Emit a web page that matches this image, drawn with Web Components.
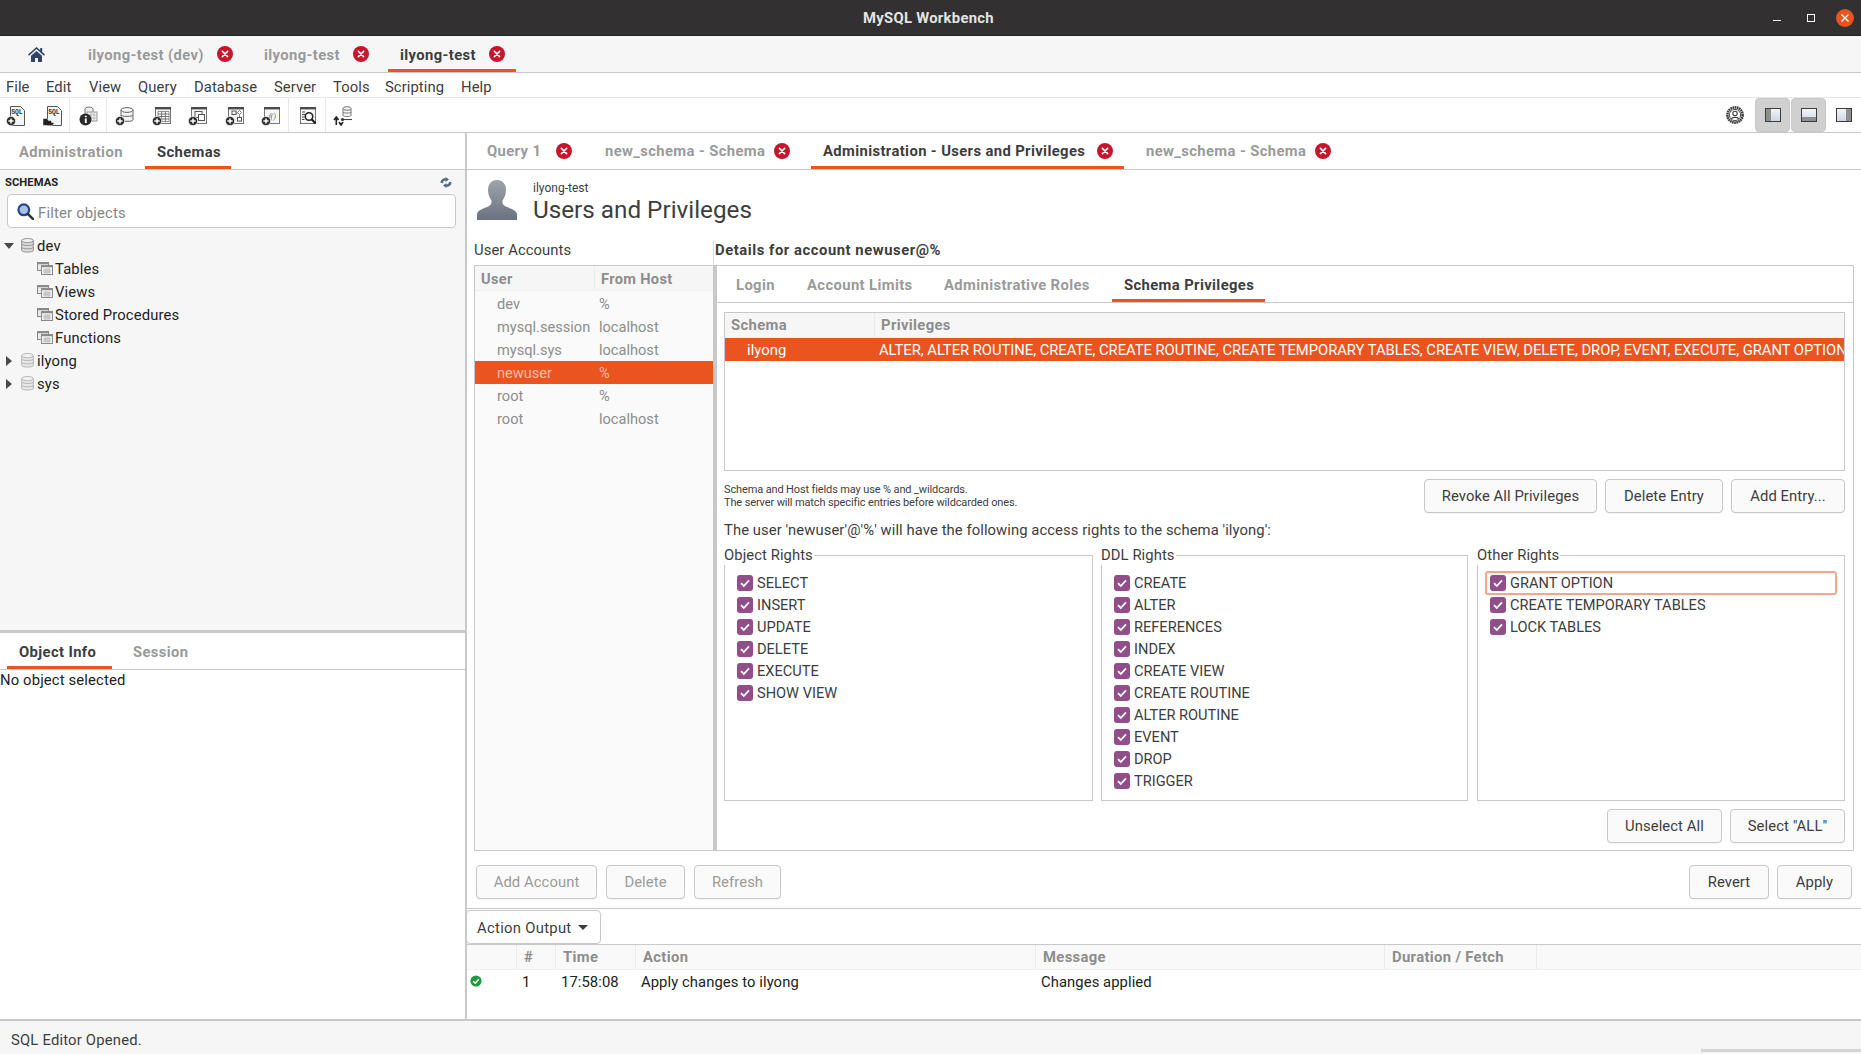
<!doctype html>
<html lang="en"><head><meta charset="utf-8"><title>MySQL Workbench</title>
<style>html,body{margin:0;padding:0;background:#fff}body{font-family:Roboto,"Liberation Sans",sans-serif;font-size:14.8px;color:#3d3d3d}</style>
</head><body>
<wb-app></wb-app>
<script>
const FONT='font-family:Roboto,"Liberation Sans",sans-serif;';
function def(name,css,html){
  customElements.define(name,class extends HTMLElement{
    constructor(){super();const r=this.attachShadow({mode:'open'});
      r.innerHTML='<style>'+css+'</style>'+(typeof html==='function'?html(this):html);}
  });
}
/* icons */
const closeIcon=`<svg width="16" height="16" viewBox="0 0 16 16"><circle cx="8" cy="8" r="8" fill="#c7162b"/><path d="M5.4 5.4l5.2 5.2M10.6 5.4l-5.2 5.2" stroke="#fff" stroke-width="1.6" stroke-linecap="round"/></svg>`;
const badge=(x=5,y=15)=>`<circle cx="${x}" cy="${y}" r="4.6" fill="#2e2e2e" stroke="#fff" stroke-width=".6"/><path d="M${x-2.6} ${y}h5.2M${x} ${y-2.6}v5.2" stroke="#fff" stroke-width="1.5"/>`;
const win=(inner)=>`<rect x="3.5" y="1.5" width="15" height="16" fill="#f7f7f7" stroke="#777"/><rect x="3" y="1" width="16" height="2.4" fill="#4a4a4a"/>${inner}`;
const svg20=b=>`<svg width="20" height="20" viewBox="0 0 20 20">${b}</svg>`;
const docSql=`<path d="M4.5 .5h10l4 4v15h-14z" fill="#f6f6f6" stroke="#555"/><text x="5.2" y="7.6" style="font:bold 6.4px 'Liberation Mono',monospace;letter-spacing:0" fill="#333">SQL</text>`;
const cyl=(c='#f4f4f4',s='#666')=>`<path d="M6 4v10c0 1.8 12 1.8 12 0V4" fill="${c}" stroke="${s}"/><ellipse cx="12" cy="4" rx="6" ry="2.4" fill="${c}" stroke="${s}"/><path d="M6 9c0 1.8 12 1.8 12 0" fill="none" stroke="${s}"/>`;
const icons={
 sqlnew:svg20(docSql+badge(5,15)),
 sqlopen:svg20(docSql+`<path d="M0 19.5v-7h4l1.5 2h3v2h3l-2 3z" fill="#222" stroke="#fff" stroke-width=".5"/>`),
 info:svg20(`<ellipse cx="10" cy="3" rx="4" ry="2" fill="#eee" stroke="#777"/><path d="M6 3v6h8V3" fill="#eee" stroke="#777"/><rect x="8" y="6" width="10" height="9" fill="#f4f4f4" stroke="#999"/><path d="M8 9h10M8 12h10M12 6v9M15 6v9" stroke="#aaa" stroke-width=".7"/><circle cx="6.5" cy="13.5" r="6" fill="#2b2b2b"/><path d="M6.8 9.8v1.4M6.8 12.4v4.6" stroke="#fff" stroke-width="1.9"/>`),
 schema:svg20(cyl()+badge(5,15)),
 table:svg20(win(`<path d="M6 5.5h11v10H6z" fill="#fff" stroke="#666" stroke-width=".7"/><path d="M6 8h11M6 10.5h11M6 13h11M9.7 5.5v10M13.3 5.5v10" stroke="#555" stroke-width=".8"/>`)+badge(5,15)),
 view:svg20(win(`<rect x="7" y="5.5" width="7" height="6" fill="#fff" stroke="#555"/><rect x="10.5" y="8.5" width="6" height="6" fill="#fff" stroke="#555"/>`)+badge(5,15)),
 proc:svg20(win(`<rect x="7" y="5" width="4" height="3.5" fill="#fff" stroke="#555"/><rect x="12.5" y="11.5" width="4" height="3.5" fill="#fff" stroke="#555"/><path d="M14.5 4.5l2 2-2 2-2-2z" fill="#fff" stroke="#555" stroke-width=".8"/><path d="M11 7h1.5M14.5 8.5v3" stroke="#555" stroke-width=".7"/>`)+badge(5,15)),
 func:svg20(win(`<text x="7.4" y="13" style="font:italic 8px 'Liberation Serif',serif;letter-spacing:0" fill="#666">f()</text>`)+badge(5,15)),
 search:svg20(win(`<path d="M5 6h3M5 8.5h3M5 11h2.5M5 13.5h2.5" stroke="#444" stroke-width="1"/><circle cx="12" cy="10.5" r="3.7" fill="#fff" stroke="#222" stroke-width="1.6"/><path d="M14.6 13.2l4 4.2" stroke="#222" stroke-width="2.2"/>`)),
 recon:svg20(`<path d="M10 2.5v7c0 1.4 8 1.4 8 0v-7" fill="#f4f4f4" stroke="#777"/><ellipse cx="14" cy="2.5" rx="4" ry="1.8" fill="#f4f4f4" stroke="#777"/><path d="M10 6c0 1.4 8 1.4 8 0" fill="none" stroke="#777"/><path d="M8 13.5h11" stroke="#444" stroke-width="1.1"/><circle cx="9.5" cy="13.5" r="1.6" fill="#333"/><path d="M1 14l2.3-3 2.3 3M3.3 11v8M6 16l2 3 2-3" stroke="#222" stroke-width="1.6" fill="none"/>`),
 gear:`<svg width="18" height="18" viewBox="0 0 18 18"><circle cx="9" cy="9" r="7.6" fill="#fff" stroke="#3f3f3f" stroke-width="2.6" stroke-dasharray="1.7 .5"/><circle cx="9" cy="9" r="5.6" fill="#fff" stroke="#3f3f3f" stroke-width=".9"/><circle cx="9" cy="7.4" r="2.2" fill="none" stroke="#3f3f3f" stroke-width="1.1"/><path d="M5.4 13c.6-2.2 6.6-2.2 7.2 0" fill="none" stroke="#3f3f3f" stroke-width="1.2"/></svg>`,
 home:`<svg width="17" height="15" viewBox="0 0 17 15"><path d="M8.5 0L0 7.6l1 1.1L8.5 2l7.5 6.7 1-1.1-2.8-2.5V1h-2v2.3z" fill="#2f4468"/><path d="M3 8.8L8.5 4 14 8.8V15h-4v-4H7v4H3z" fill="#2f4468"/></svg>`,
 search16:`<svg width="17" height="17" viewBox="0 0 17 17"><circle cx="6.8" cy="6.8" r="5.4" fill="#a9c0e6" stroke="#24458f" stroke-width="2.2"/><path d="M10.8 10.8l5 5" stroke="#333" stroke-width="2.6" stroke-linecap="round"/></svg>`,
 refresh:`<svg width="12" height="11" viewBox="0 0 12 11"><path d="M.5 5.8C.5 2.8 3 1 5.8 1.2L5.3 0 9 2.4 5.4 5 5.7 3.6C4.2 3.5 2.9 4.4 3 6.2z" fill="#4f6a86"/><path d="M11.5 5.2C11.5 8.2 9 10 6.2 9.8L6.7 11 3 8.6 6.6 6 6.3 7.4C7.8 7.5 9.1 6.6 9 4.8z" fill="#4f6a86"/></svg>`,
 db:on=>`<svg width="13" height="15" viewBox="0 0 13 15"><path d="M.7 2.6v9.8C.7 14.6 12.3 14.6 12.3 12.4V2.6" fill="${on?'#dcdcdc':'#e6e6e6'}" stroke="${on?'#8f8f8f':'#b5b5b5'}"/><ellipse cx="6.5" cy="2.6" rx="5.8" ry="2.1" fill="${on?'#efefef':'#f2f2f2'}" stroke="${on?'#8f8f8f':'#b5b5b5'}"/><path d="M.7 6c0 2 11.6 2 11.6 0M.7 9.3c0 2 11.6 2 11.6 0" fill="none" stroke="${on?'#8f8f8f':'#b5b5b5'}"/></svg>`,
 folder:`<svg width="16" height="13" viewBox="0 0 16 13"><rect x=".5" y=".5" width="11" height="8" fill="#e9e9e9" stroke="#8a8a8a"/><rect x="0" y="0" width="12" height="2.2" fill="#8a8a8a"/><rect x="4.5" y="3.5" width="11" height="9" fill="#f3f3f3" stroke="#8a8a8a"/><rect x="4" y="3" width="12" height="2.2" fill="#8a8a8a"/><path d="M7 7h6v4H7zM9 7v4M11 7v4M7 9h6" fill="none" stroke="#aaa" stroke-width=".7"/></svg>`,
 ok:`<svg width="12" height="12" viewBox="0 0 12 12"><circle cx="6" cy="6" r="5.6" fill="#1d9a3c"/><path d="M3.2 6.2l2 2 3.6-4" fill="none" stroke="#fff" stroke-width="1.6"/></svg>`,
 user:`<svg width="40" height="40" viewBox="0 0 40 40"><defs><linearGradient id="u" x1="0" y1="0" x2="0" y2="1"><stop offset="0" stop-color="#a0a4aa"/><stop offset="1" stop-color="#687280"/></linearGradient></defs><path d="M20 0c6 0 9 4.5 9 10 0 5-2 8-3.4 10.5-.6 3 .4 5 4.4 6.5 5 2 9.5 3.5 10 7V40H0v-6c.5-3.5 5-5 10-7 4-1.5 5-3.5 4.4-6.5C13 18 11 15 11 10c0-5.5 3-10 9-10z" fill="url(#u)"/></svg>`
};
const layoutIcon=m=>{const fill={l:'<rect x="1" y="1" width="5" height="12" fill="#8f8f8f"/>',b:'<rect x="1" y="9" width="14" height="4" fill="#8f8f8f"/>',r:'<rect x="10" y="1" width="5" height="12" fill="#8f8f8f"/>'}[m];
 return `<svg width="16" height="14" viewBox="0 0 16 14"><defs><linearGradient id="g${m}" x1="0" y1="0" x2="0" y2="1"><stop offset="0" stop-color="#f3f5f9"/><stop offset="1" stop-color="#cfd6e3"/></linearGradient></defs><rect x=".5" y=".5" width="15" height="13" fill="url(#g${m})" stroke="#3c3c3c"/>${fill}</svg>`;};

/* generic pieces */
def('wb-close',':host{display:inline-flex;width:16px;height:16px;flex:none}',closeIcon);
def('wb-tab',`:host{display:flex;align-items:center;justify-content:space-between;box-sizing:border-box;height:100%;padding:0 11px 0 12px;font-weight:700;color:#9a9a9a;flex:none;letter-spacing:.38px}
:host([active]){color:#3d3d3d;box-shadow:inset 0 -3px 0 #e95420}
.t{white-space:nowrap;padding-top:var(--tab-pt,2px)}`,`<span class="t"><slot></slot></span><slot name="end"></slot>`);
def('wb-button',`:host{display:flex;align-items:center;justify-content:center;box-sizing:border-box;height:34px;border:1px solid #c8c8c8;border-radius:4px;background:#fafafa;color:#3d3d3d;flex:none;box-shadow:0 1px 0 rgba(0,0,0,.04);white-space:nowrap}
:host([disabled]){color:#9a9a9a}`,`<slot></slot>`);
def('wb-check',`:host{display:flex;align-items:center;height:22px;box-sizing:border-box;padding-left:var(--check-pad,12px);white-space:nowrap;color:#3d3d3d;font-size:14.6px;letter-spacing:0}
.b{width:16px;height:16px;border-radius:3px;background:#924d8b;flex:none;margin-right:4px;display:flex;align-items:center;justify-content:center}
:host([focus]){outline:2px solid #f3a58e;outline-offset:-2px;border-radius:3px;height:24px;margin-top:-1px;margin-bottom:-1px}`,
`<span class="b"><svg width="12" height="12" viewBox="0 0 12 12"><path d="M2 6.2l2.8 2.8L10 3.4" fill="none" stroke="#fff" stroke-width="1.8"/></svg></span><slot></slot>`);
def('wb-group',`:host{display:block;min-width:0}
fieldset{margin:0;padding:0;border:1px solid #c8c8c8;height:100%;box-sizing:border-box;min-width:0}
legend{padding:0 1px 0 0;margin-left:-1px;line-height:19px;color:#3d3d3d}
.c{padding:7px 0 0 0;display:flex;flex-direction:column}`,
h=>`<fieldset><legend>${h.getAttribute('legend')}</legend><div class="c"><slot></slot></div></fieldset>`);

/* chrome */
def('wb-titlebar',`:host{display:flex;align-items:center;height:36px;box-sizing:border-box;background:#323030;border-bottom:1px solid #222;color:#e4e4e4;font-weight:700;flex:none;letter-spacing:.3px}
.c{display:flex;align-items:center;margin-left:auto;padding-right:7px;height:100%}
.min{width:8px;height:1px;background:#fff;margin:6px 26px 0 0}
.max{width:6px;height:6px;border:1px solid #fff;margin-right:21px}
.x{width:18px;height:18px;border-radius:50%;background:#e95420;display:flex;align-items:center;justify-content:center}`,
`<span style="margin-left:863px">MySQL Workbench</span><div class="c"><span class="min"></span><span class="max"></span><span class="x"><svg width="10" height="10" viewBox="0 0 10 10"><path d="M1.5 1.5l7 7M8.5 1.5l-7 7" stroke="#fff" stroke-width="1.3"/></svg></span></div>`);
def('wb-conntabs',`:host{display:flex;height:37px;box-sizing:border-box;background:#f6f6f6;border-bottom:1px solid #c8c8c8;flex:none;gap:8px}
.h{width:68px;display:flex;align-items:center;justify-content:flex-end;padding-right:23px;box-sizing:border-box}`,
`<span class="h">${icons.home}</span><wb-tab style="width:168px">ilyong-test (dev)<wb-close slot="end"></wb-close></wb-tab><wb-tab style="width:128px">ilyong-test<wb-close slot="end"></wb-close></wb-tab><wb-tab active style="width:128px">ilyong-test<wb-close slot="end"></wb-close></wb-tab>`);
def('wb-menubar',`:host{display:flex;height:25px;box-sizing:border-box;background:#fff;border-bottom:1px solid #e8e8e8;align-items:center;flex:none;color:#3d3d3d}
span{flex:none;padding-top:3px}`,
[['File',40],['Edit',43],['View',49],['Query',56],['Database',80],['Server',59],['Tools',52],['Scripting',76],['Help',40]].map((m,i)=>`<span style="width:${m[1]}px;${i==0?'margin-left:6px':''}">${m[0]}</span>`).join(''));
def('wb-toolbar',`:host{display:flex;height:35px;box-sizing:border-box;background:#fff;border-bottom:1px solid #c8c8c8;flex:none}
.g{display:flex;border-right:1px solid #e8e8e8;padding-top:8px;height:26px;flex:none}
.g svg{display:block}
.r{margin-left:auto;display:flex;align-items:stretch}
.gear{display:flex;align-items:center;margin-right:11px}
.b{width:35px;display:flex;align-items:center;justify-content:center;border-radius:4px;flex:none;box-sizing:border-box}
.b.on{background:#d0d0d0;border:1px solid #c8c8c8}`,
`<div class="g" style="padding-left:6px;gap:17px;width:63px">${icons.sqlnew}${icons.sqlopen}</div>
<div class="g" style="padding-left:9px;width:27px">${icons.info}</div>
<div class="g" style="padding-left:8px;gap:16.5px;width:173px">${icons.schema}${icons.table}${icons.view}${icons.proc}${icons.func}</div>
<div class="g" style="padding-left:8px;width:28px">${icons.search}</div>
<div class="g" style="padding-left:7px;border:0;width:28px">${icons.recon}</div>
<div class="r"><span class="gear">${icons.gear}</span><span class="b on">${layoutIcon('l')}</span><span class="b on" style="margin-left:1px">${layoutIcon('b')}</span><span class="b" style="width:34px;margin-left:1px">${layoutIcon('r')}</span></div>`);
def('wb-statusbar',`:host{display:flex;align-items:center;height:35px;box-sizing:border-box;background:#f6f6f6;border-top:2px solid #c8c8c8;flex:none;padding:4px 0 0 11px;color:#3d3d3d;letter-spacing:.2px;position:relative}
.s{position:absolute;right:0;bottom:2px;width:160px;height:3px;background:#d4d4d4}`,`SQL Editor Opened.<span class="s"></span>`);

/* sidebar */
def('wb-tree-row',`:host{display:flex;align-items:center;height:23px;color:#222;flex:none;letter-spacing:.15px}
.a{width:21px;flex:none;display:flex;justify-content:center;padding-right:3px;box-sizing:border-box}
.i{display:flex;margin-right:3px}
:host([leaf]){padding-left:37px}
:host([leaf]) .i{margin-right:2px}`,
h=>{const k=h.getAttribute('kind');
 const arrow=k==='open'?`<svg width="10" height="6" viewBox="0 0 10 6"><path d="M0 0h10L5 6z" fill="#4a4a4a"/></svg>`:`<svg width="6" height="10" viewBox="0 0 6 10"><path d="M0 0v10l6-5z" fill="#4a4a4a"/></svg>`;
 if(k==='leaf')return `<span class="i">${icons.folder}</span><slot></slot>`;
 return `<span class="a">${arrow}</span><span class="i">${icons.db(k==='open')}</span><slot></slot>`;});
def('wb-sidebar',`:host{display:flex;flex-direction:column;width:467px;box-sizing:border-box;border-right:2px solid #c8c8c8;flex:none;height:100%;background:#fff}
.tabs{display:flex;height:37px;box-sizing:border-box;border-bottom:1px solid #c8c8c8;padding-left:7px;gap:9px;flex:none;background:#fff}
.top{height:460px;flex:none;background:#f6f6f6;box-sizing:border-box;display:flex;flex-direction:column}
.hd{display:flex;align-items:center;justify-content:space-between;height:24px;padding:0 13px 0 5px;font-size:11.2px;font-weight:700;color:#222;flex:none}
.f{margin:0 9px 6px 7px;height:34px;box-sizing:border-box;border:1px solid #c8c8c8;border-radius:4px;background:#fff;display:flex;align-items:center;padding-left:9px;color:#868686;flex:none;letter-spacing:.2px}
.f svg{margin-right:4px;flex:none}
.f span{padding-top:4px}
.split{height:3px;background:#c8c8c8;flex:none}
.info{flex:1;background:#fff;color:#222;padding-top:1px;line-height:18px;letter-spacing:.15px}`,
`<div class="tabs"><wb-tab style="width:129px">Administration</wb-tab><wb-tab active style="width:86px">Schemas</wb-tab></div>
<div class="top"><div class="hd"><span>SCHEMAS</span>${icons.refresh}</div>
<div class="f">${icons.search16}<span>Filter objects</span></div>
<wb-tree-row kind="open">dev</wb-tree-row>
<wb-tree-row kind="leaf" leaf>Tables</wb-tree-row><wb-tree-row kind="leaf" leaf>Views</wb-tree-row><wb-tree-row kind="leaf" leaf>Stored Procedures</wb-tree-row><wb-tree-row kind="leaf" leaf>Functions</wb-tree-row>
<wb-tree-row kind="closed">ilyong</wb-tree-row><wb-tree-row kind="closed">sys</wb-tree-row></div>
<div class="split"></div>
<div class="tabs"><wb-tab active style="width:105px">Object Info</wb-tab><wb-tab style="width:62px;padding-right:0">Session</wb-tab></div>
<div class="info">No object selected</div>`);

/* admin page */
def('wb-user-list',`:host{display:flex;flex-direction:column;height:100%;box-sizing:border-box;border:1px solid #c8c8c8;border-right:0;background:#fafafa;color:#8d8d8d;letter-spacing:0;font-size:14.6px}
.h{display:grid;grid-template-columns:119px 1fr;height:24px;background:#f6f6f6;font-weight:700;align-items:center;flex:none;border-bottom:1px solid #f0f0f0;margin-bottom:1px;letter-spacing:.35px}
.h span{padding:2px 0 0 6px;height:100%;box-sizing:border-box;display:flex;align-items:center}
.h span+span{border-left:1px solid #ececec;padding-left:6px}
.r{display:grid;grid-template-columns:102px 1fr;height:23px;align-items:center;padding-left:22px;box-sizing:border-box;white-space:nowrap;flex:none}
.r.s{background:#e95420;color:#f6bda6}
.r span{overflow:hidden}`,
`<div class="h"><span>User</span><span>From Host</span></div>`+
[['dev','%'],['mysql.session','localhost'],['mysql.sys','localhost'],['newuser','%'],['root','%'],['root','localhost']].map(r=>`<div class="r${r[0]=='newuser'?' s':''}"><span>${r[0]}</span><span>${r[1]}</span></div>`).join(''));
def('wb-privilege-table',`:host{display:block;height:159px;box-sizing:border-box;border:1px solid #c8c8c8;flex:none;overflow:hidden;background:#fff}
.h{display:grid;grid-template-columns:149px 1fr;height:25px;background:#f6f6f6;font-weight:700;color:#8d8d8d;align-items:center;letter-spacing:.35px}
.h span{padding:0 0 2px 6px;height:100%;box-sizing:border-box;display:flex;align-items:center}
.h span+span{border-left:1px solid #ececec}
.r{display:grid;grid-template-columns:154px 1fr;height:23px;background:#e95420;color:#fff;align-items:center;white-space:nowrap;letter-spacing:-.04px}
.r span:first-child{padding-left:22px;letter-spacing:.08px}
.r span{overflow:hidden;padding-top:1px}`,
`<div class="h"><span>Schema</span><span>Privileges</span></div><div class="r"><span>ilyong</span><span>ALTER, ALTER ROUTINE, CREATE, CREATE ROUTINE, CREATE TEMPORARY TABLES, CREATE VIEW, DELETE, DROP, EVENT, EXECUTE, GRANT OPTION</span></div>`);
def('wb-details',`:host{display:flex;flex-direction:column;height:100%;box-sizing:border-box;border:1px solid #c8c8c8;background:#fff}
.tabs{display:flex;height:37px;box-sizing:border-box;border-bottom:1px solid #c8c8c8;padding-left:7px;flex:none}
.b{flex:1;padding:9px 8px 0 7px;display:flex;flex-direction:column}
.row{display:flex;justify-content:flex-end;gap:8px;align-items:center;margin-top:8px;flex:none}
.hint{margin-right:auto;font-size:11px;line-height:13px;color:#3d3d3d;letter-spacing:-.13px}
.sent{height:18px;line-height:18px;margin-top:8px;flex:none;color:#3d3d3d}
.g{display:grid;grid-template-columns:369px 367px 1fr;gap:8px;height:255px;margin-top:7px;flex:none}
.g wb-group:last-child{margin-left:1px}`,
`<div class="tabs"><wb-tab style="width:71px">Login</wb-tab><wb-tab style="width:137px">Account Limits</wb-tab><wb-tab style="width:180px">Administrative Roles</wb-tab><wb-tab active style="width:153px">Schema Privileges</wb-tab></div>
<div class="b"><wb-privilege-table></wb-privilege-table>
<div class="row"><div class="hint">Schema and Host fields may use % and _wildcards.<br>The server will match specific entries before wildcarded ones.</div><wb-button style="width:173px">Revoke All Privileges</wb-button><wb-button style="width:118px">Delete Entry</wb-button><wb-button style="width:114px">Add Entry...</wb-button></div>
<div class="sent">The user 'newuser'@'%' will have the following access rights to the schema 'ilyong':</div>
<div class="g">
<wb-group legend="Object Rights">${['SELECT','INSERT','UPDATE','DELETE','EXECUTE','SHOW VIEW'].map(t=>`<wb-check>${t}</wb-check>`).join('')}</wb-group>
<wb-group legend="DDL Rights">${['CREATE','ALTER','REFERENCES','INDEX','CREATE VIEW','CREATE ROUTINE','ALTER ROUTINE','EVENT','DROP','TRIGGER'].map(t=>`<wb-check>${t}</wb-check>`).join('')}</wb-group>
<wb-group legend="Other Rights"><wb-check focus style="--check-pad:5px;margin-left:7px;margin-right:7px">GRANT OPTION</wb-check><wb-check>CREATE TEMPORARY TABLES</wb-check><wb-check>LOCK TABLES</wb-check></wb-group>
</div>
<div class="row" style="height:34px"><wb-button style="width:115px">Unselect All</wb-button><wb-button style="width:115px">Select "ALL"</wb-button></div></div>`);
def('wb-admin',`:host{display:flex;flex-direction:column;flex:1;min-height:0;box-sizing:border-box;background:#fff}
.hd{display:flex;height:70px;box-sizing:border-box;padding:10px 0 0 10px;flex:none}
.hd svg{flex:none;display:block}
.tt{margin-left:16px;display:flex;flex-direction:column}
.sub{font-size:12px;line-height:16px;color:#3d3d3d;letter-spacing:0}
.h1{font-size:24.25px;line-height:29px;color:#3d3d3d;letter-spacing:0}
.main{display:grid;grid-template-columns:239px 1fr;grid-template-rows:25px 586px;margin:0 7px;flex:none}
.l{line-height:19px;padding-top:1px;color:#3d3d3d}
.d{font-weight:700;line-height:19px;padding-top:1px;color:#3d3d3d;border-left:1px solid #e0e0e0;padding-left:1px;letter-spacing:.55px}
.rs{border-left:3px solid #c8c8c8;min-height:0}
.acts{display:flex;gap:9px;height:58px;padding:14px 9px 0 9px;box-sizing:border-box;border-bottom:1px solid #c8c8c8;flex:none}
.sp{flex:1}`,
`<div class="hd">${icons.user}<div class="tt"><span class="sub">ilyong-test</span><span class="h1">Users and Privileges</span></div></div>
<div class="main"><div class="l">User Accounts</div><div class="d">Details for account newuser@%</div><wb-user-list></wb-user-list><div class="rs"><wb-details></wb-details></div></div>
<div class="acts"><wb-button disabled style="width:121px">Add Account</wb-button><wb-button disabled style="width:79px">Delete</wb-button><wb-button disabled style="width:87px">Refresh</wb-button><span class="sp"></span><wb-button style="width:80px">Revert</wb-button><wb-button style="width:75px;margin-left:-1px">Apply</wb-button></div>`);
def('wb-output',`:host{display:flex;flex-direction:column;height:109px;flex:none;background:#fff;box-sizing:border-box}
.top{height:35px;box-sizing:border-box;border-bottom:1px solid #c8c8c8;flex:none;display:flex}
.dd{width:135px;height:34px;box-sizing:border-box;border:1px solid #c8c8c8;border-radius:4px;margin-left:-1px;display:flex;align-items:center;padding:1px 0 0 10px;color:#3d3d3d;background:#fff;letter-spacing:.3px}
.dd svg{margin-left:6px}
.h,.r{display:grid;grid-template-columns:50px 39px 80px 400px 349px 152px 1fr;align-items:center}
.h{height:25px;background:#f9f9f9;color:#8d8d8d;font-weight:700;border-bottom:1px solid #f0f0f0;box-sizing:border-box;flex:none;letter-spacing:.35px}
.h span{height:100%;display:flex;align-items:center;padding-left:7px;border-right:1px solid #ececec;box-sizing:border-box}
.r{height:24px;color:#222}
.r span{padding-left:5px;white-space:nowrap}
.r .ic{padding-left:3px;display:flex;margin-top:-2px}`,
`<div class="top"><div class="dd">Action Output<svg width="10" height="5" viewBox="0 0 10 5"><path d="M0 0h10L5 5z" fill="#3d3d3d"/></svg></div></div>
<div class="h"><span></span><span>#</span><span>Time</span><span>Action</span><span>Message</span><span>Duration / Fetch</span><span style="border:0"></span></div>
<div class="r"><span class="ic">${icons.ok}</span><span>1</span><span>17:58:08</span><span>Apply changes to ilyong</span><span>Changes applied</span><span></span><span></span></div>`);
def('wb-app',`:host{display:flex;flex-direction:column;width:1861px;height:1054px;overflow:hidden;${FONT}font-size:14.8px;letter-spacing:.08px;color:#3d3d3d;background:#fff}
.body{display:flex;flex:1;min-height:0}
.m{flex:1;min-width:0;display:flex;flex-direction:column}
.tabs{display:flex;height:37px;box-sizing:border-box;border-bottom:1px solid #c8c8c8;padding-left:8px;gap:10px;flex:none;--tab-pt:0}`,
`<wb-titlebar></wb-titlebar><wb-conntabs></wb-conntabs><wb-menubar></wb-menubar><wb-toolbar></wb-toolbar>
<div class="body"><wb-sidebar></wb-sidebar><div class="m">
<div class="tabs"><wb-tab style="width:108px">Query 1<wb-close slot="end"></wb-close></wb-tab><wb-tab style="width:208px">new_schema - Schema<wb-close slot="end"></wb-close></wb-tab><wb-tab active style="width:313px">Administration - Users and Privileges<wb-close slot="end"></wb-close></wb-tab><wb-tab style="width:208px">new_schema - Schema<wb-close slot="end"></wb-close></wb-tab></div>
<wb-admin></wb-admin><wb-output></wb-output></div></div>
<wb-statusbar></wb-statusbar>`);
</script>
</body></html>
